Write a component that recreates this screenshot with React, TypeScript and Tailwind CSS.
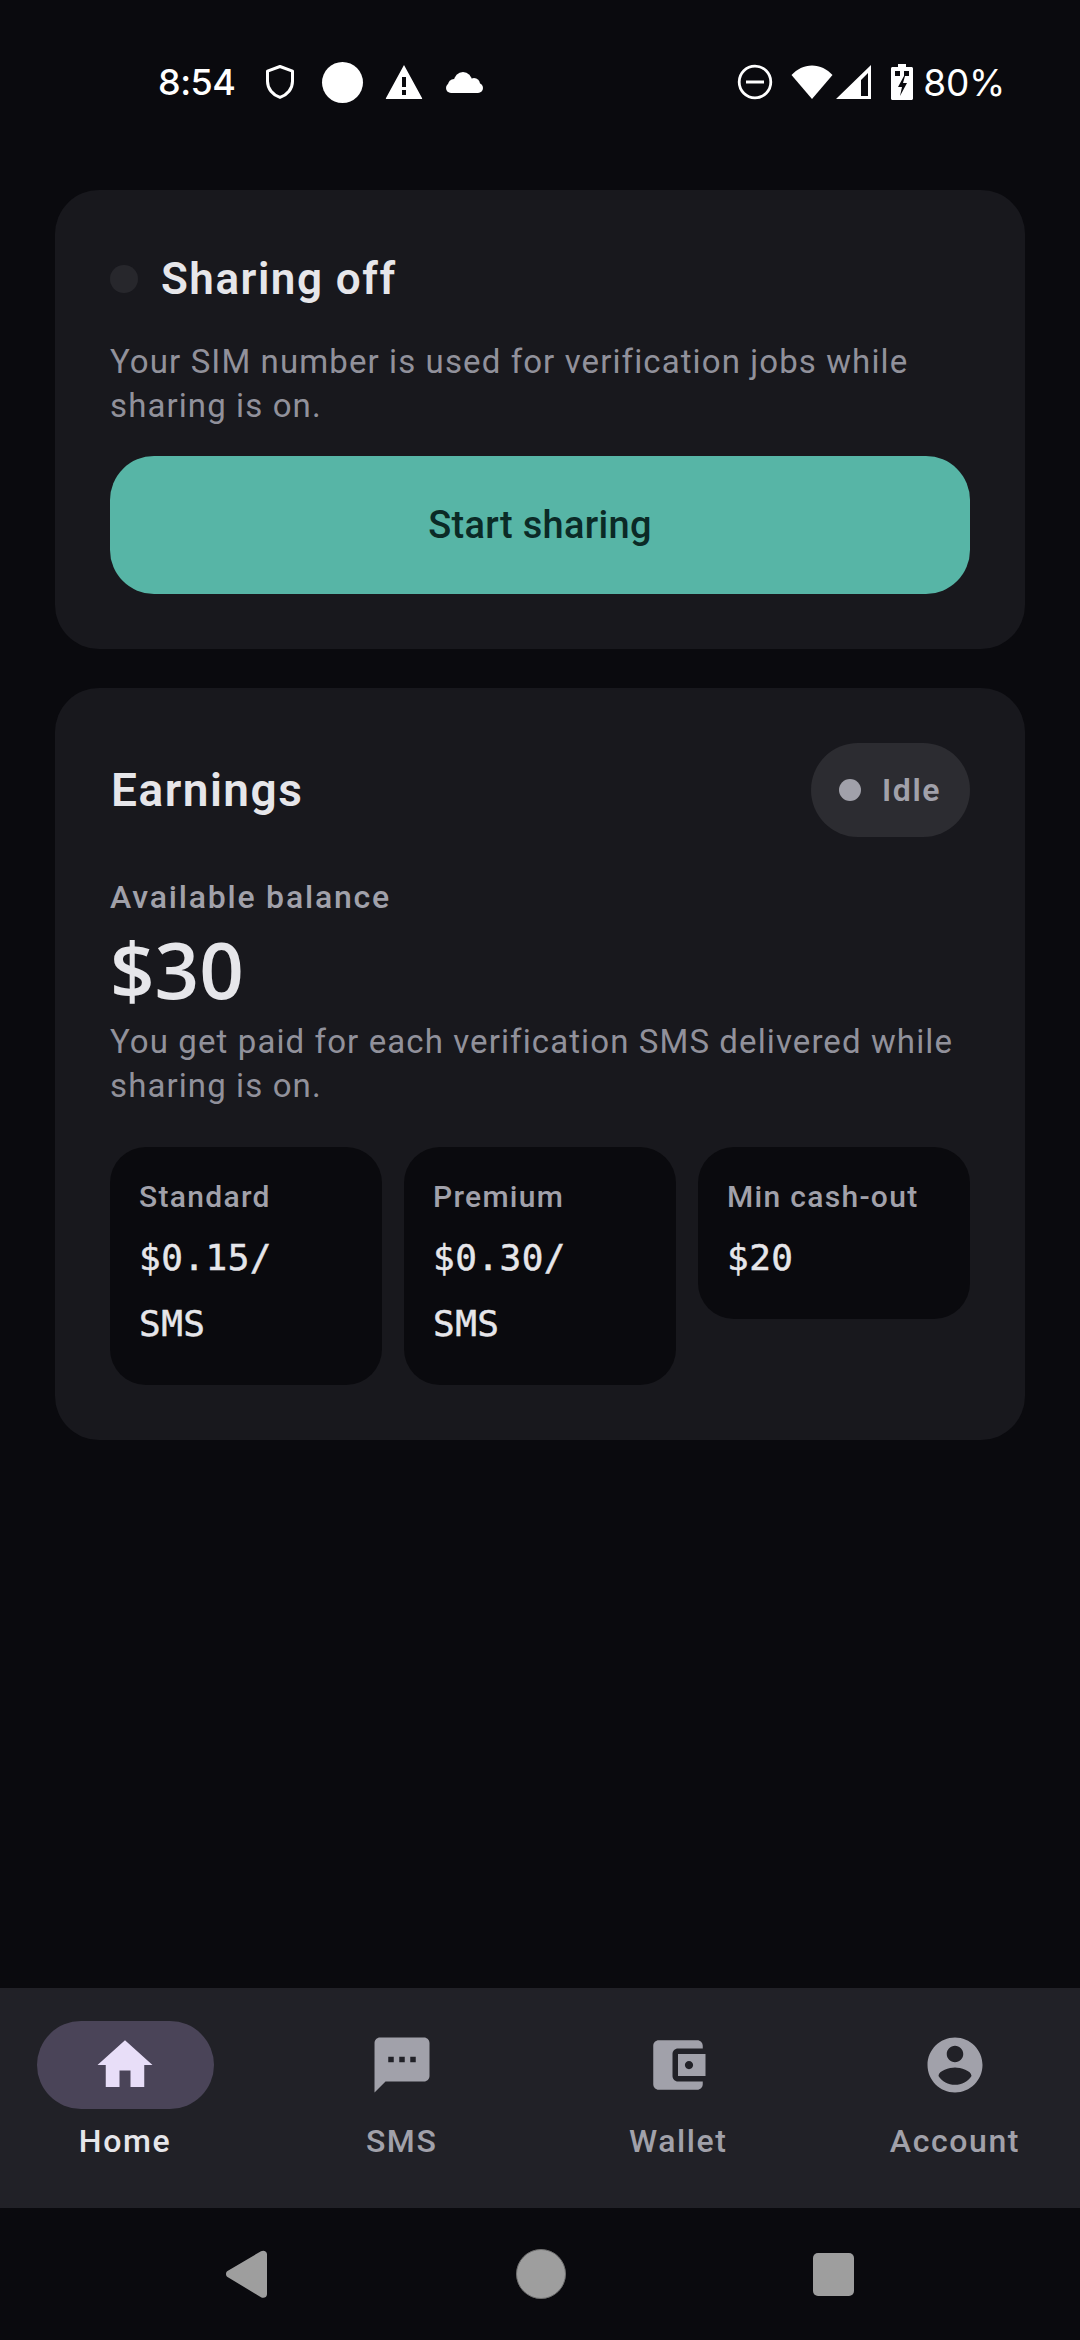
import type { ReactNode } from "react";

function StatusBar() {
  return (
    <div className="flex h-[164px] items-center justify-between pl-[158px] pr-[75px] text-white font-['Inter',sans-serif]">
      <div className="flex items-center">
        <span className="w-[78px] text-[36px] leading-none font-medium tracking-[-0.5px]">8:54</span>
        <svg className="ml-[28px] h-[36px] w-[32px]" viewBox="0 0 32 36" fill="none" stroke="#fff" strokeWidth="3">
          <path d="M16 2.500 3.500 7.200v10c0 7.600 5.200 13.700 12.500 16.200 7.300-2.500 12.500-8.600 12.500-16.200v-10z" strokeLinejoin="round" />
        </svg>
        <div className="ml-[26px] h-[41px] w-[41px] rounded-full bg-white" />
        <svg className="ml-[22px] h-[34px] w-[38px]" viewBox="0 0 38 34" fill="#fff">
          <path fillRule="evenodd" d="M19 0 37 33a.6.6 0 0 1-.5 1H1.500a.6.6 0 0 1-.5-1zM17 12v10h4V12zm0 13v5h4v-5z" />
        </svg>
        <svg className="ml-[23px] h-[21px] w-[37px]" viewBox="0 0 37 21" fill="#fff">
          <rect x="0" y="11" width="37" height="10" rx="5" />
          <circle cx="17" cy="9" r="9" />
          <circle cx="28" cy="12" r="6" />
          <circle cx="8" cy="13" r="6" />
        </svg>
      </div>
      <div className="flex items-center">
        <svg className="h-[36px] w-[36px]" viewBox="0 0 36 36" fill="none" stroke="#fff">
          <circle cx="18" cy="18" r="15.800" strokeWidth="2.800" />
          <path d="M9 18h18" strokeWidth="3" />
        </svg>
        <svg className="ml-[18px] h-[34px] w-[42px]" viewBox="0 0 42 34" fill="#fff">
          <path d="M21 34 .5 10C6 4 13 .4 21 .4S36 4 41.500 10z" />
        </svg>
        <svg className="ml-[3px] h-[34px] w-[35px]" viewBox="0 0 35 34" fill="#fff">
          <path fillRule="evenodd" d="M35 0v34H0zM32 8 25 15v16h7z" />
        </svg>
        <svg className="ml-[20px] h-[36px] w-[22px]" viewBox="0 0 22 36" fill="#fff">
          <path fillRule="evenodd" d="M7 0h8v3h5.500c.8 0 1.500.7 1.500 1.500V34.500c0 .8-.7 1.500-1.500 1.500H1.500C.7 36 0 35.300 0 34.500V4.500C0 3.700.7 3 1.500 3H7zM4 7v5h5V7zm9 0v5h5V7zm0 5-6 11h4l-2 9 7-13h-4l2-7z" />
        </svg>
        <span className="ml-[10px] text-[37px] leading-none font-normal tracking-[-0.3px]">80%</span>
      </div>
    </div>
  );
}

function Card({ children }: { children: ReactNode }) {
  return <div className="rounded-[44px] bg-[#18181d] p-[55px]">{children}</div>;
}

function RateTile({ label, lines }: { label: string; lines: string[] }) {
  return (
    <div className="min-w-0 flex-1 self-start rounded-[36px] bg-[#0a0a0e] pl-[29px] pr-[20px] pt-[30px] pb-[28px]">
      <div className="text-[30px] leading-[40px] font-[470] tracking-[1.3px] text-[#a1a1aa]">{label}</div>
      <div className="mt-[8px] font-['DejaVu_Sans_Mono',monospace] text-[36px] leading-[66px] font-normal tracking-[0.5px] text-[#e6e6ea] [-webkit-text-stroke:0.5px_#e6e6ea]">
        {lines.map((line) => (
          <div key={line}>{line}</div>
        ))}
      </div>
    </div>
  );
}

type NavItem = { label: string; path: string; active?: boolean };

const navItems: NavItem[] = [
  { label: "Home", path: "M10 20v-6h4v6h5v-8h3L12 3 2 12h3v8z", active: true },
  {
    label: "SMS",
    path: "M20 2H4c-1.100 0-1.990.9-1.990 2L2 22l4-4h14c1.100 0 2-.9 2-2V4c0-1.100-.9-2-2-2zM9 11H7V9h2v2zm4 0h-2V9h2v2zm4 0h-2V9h2v2z",
  },
  {
    label: "Wallet",
    path: "M21 18v1c0 1.100-.9 2-2 2H5c-1.110 0-2-.9-2-2V5c0-1.100.89-2 2-2h14c1.100 0 2 .9 2 2v1h-9c-1.110 0-2 .9-2 2v8c0 1.100.89 2 2 2h9zm-9-2h10V8H12v8zm4-2.500c-.83 0-1.500-.67-1.500-1.500s.67-1.500 1.500-1.500 1.500.67 1.500 1.500-.67 1.500-1.500 1.500z",
  },
  {
    label: "Account",
    path: "M12 2C6.480 2 2 6.480 2 12s4.480 10 10 10 10-4.480 10-10S17.520 2 12 2zm0 3c1.660 0 3 1.340 3 3s-1.340 3-3 3-3-1.340-3-3 1.340-3 3-3zm0 14.200c-2.500 0-4.710-1.280-6-3.220.03-1.990 4-3.080 6-3.080 1.990 0 5.970 1.090 6 3.080-1.290 1.940-3.500 3.220-6 3.220z",
  },
];

function BottomNav() {
  return (
    <nav className="flex h-[220px] justify-between bg-[#212127] px-[25px] pt-[33px]">
      {navItems.map((item) => (
        <div key={item.label} className="flex w-[200px] flex-col items-center">
          <div className={`flex h-[88px] w-[177px] items-center justify-center rounded-full ${item.active ? "bg-[#4a4458]" : ""}`}>
            <svg className="h-[66px] w-[66px]" viewBox="0 0 24 24" fill={item.active ? "#e8def8" : "#a1a1aa"}>
              <path d={item.path} />
            </svg>
          </div>
          <span className={`mt-[10px] text-[32px] leading-[44px] font-[470] tracking-[1.6px] ${item.active ? "text-[#e6e6ea]" : "text-[#a1a1aa]"}`}>
            {item.label}
          </span>
        </div>
      ))}
    </nav>
  );
}

function SystemNav() {
  return (
    <div className="flex h-[132px] items-center justify-center bg-[#0a0a0e]">
      <svg className="h-[48px] w-[42px]" viewBox="0 0 42 48" fill="#9e9e9e">
        <path d="M1.500 21 35 1.200c2.500-1.300 6-.2 6 3v40c0 3.200-3.500 4.300-6 3L1.500 27c-2-1.200-2-4.800 0-6z" />
      </svg>
      <div className="ml-[248px] h-[50px] w-[50px] rounded-full border border-[#6f6f6f] bg-[#9e9e9e]" />
      <div className="ml-[247px] h-[43px] w-[41px] rounded-[5px] bg-[#9e9e9e]" />
    </div>
  );
}

export default function App() {
  return (
    <div className="flex h-[2340px] w-[1080px] flex-col bg-[#0a0a0e] font-['Roboto',sans-serif]">
      <StatusBar />
      <main className="flex flex-1 flex-col gap-[39px] px-[55px] pt-[26px]">
        <Card>
          <div className="flex h-[68px] items-center">
            <span className="h-[28px] w-[28px] rounded-full bg-[#27272c]" />
            <span className="ml-[23px] text-[44px] font-semibold tracking-[1.5px] text-[#e6e6ea]">Sharing off</span>
          </div>
          <p className="mt-[27px] text-[33px] leading-[44px] tracking-[1.1px] text-[#91919b]">
            Your SIM number is used for verification jobs while sharing is on.
          </p>
          <button className="mt-[28px] flex h-[138px] w-full items-center justify-center rounded-[44px] bg-[#57b5a6] pt-[1px] text-[38px] font-[470] tracking-[0.3px] text-[#0b2a26]">
            Start sharing
          </button>
        </Card>
        <Card>
          <div className="flex items-center justify-between">
            <span className="ml-[1px] text-[46px] font-semibold tracking-[1.5px] text-[#e6e6ea]">Earnings</span>
            <div className="flex h-[94px] w-[159px] items-center rounded-full bg-[#2c2c31] pl-[28px]">
              <span className="h-[22px] w-[22px] rounded-full bg-[#a1a1aa]" />
              <span className="ml-[21px] text-[32px] font-semibold tracking-[1.6px] text-[#a1a1aa]">Idle</span>
            </div>
          </div>
          <div className="mt-[38px] text-[32px] leading-[44px] font-[470] tracking-[1.8px] text-[#a1a1aa]">Available balance</div>
          <div className="mt-[5px] font-['Open_Sans',sans-serif] text-[78px] leading-[90px] font-semibold text-[#e6e6ea]">$30</div>
          <p className="mt-[6px] text-[33px] leading-[44px] tracking-[1.1px] text-[#91919b]">
            You get paid for each verification SMS delivered while sharing is on.
          </p>
          <div className="mt-[39px] flex gap-[22px]">
            <RateTile label="Standard" lines={["$0.15/", "SMS"]} />
            <RateTile label="Premium" lines={["$0.30/", "SMS"]} />
            <RateTile label="Min cash-out" lines={["$20"]} />
          </div>
        </Card>
      </main>
      <BottomNav />
      <SystemNav />
    </div>
  );
}
